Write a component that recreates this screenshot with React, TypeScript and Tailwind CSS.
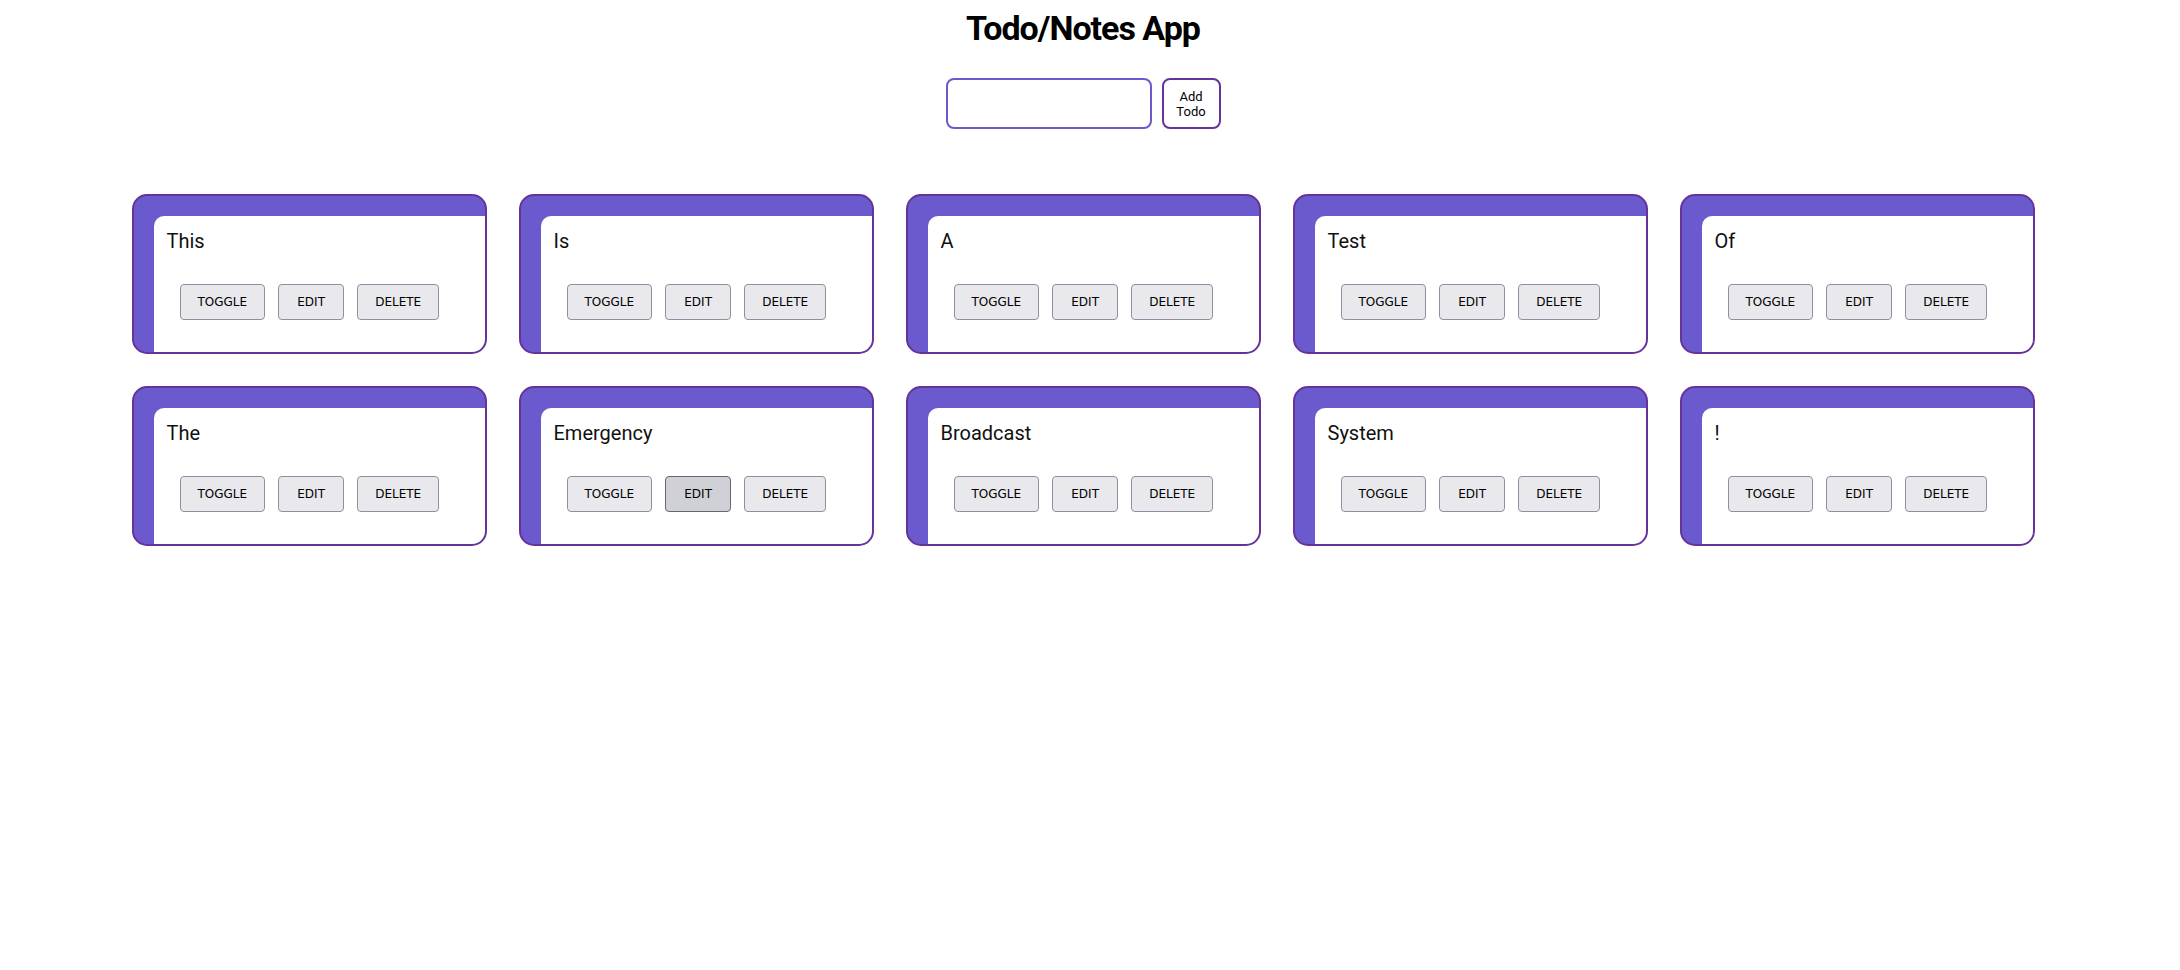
import React from "react";

const items = ["This", "Is", "A", "Test", "Of", "The", "Emergency", "Broadcast", "System", "!"];

function Btn({ label, hover, wide }: { label: string; hover?: boolean; wide?: boolean }) {
  return (
    <button
      className={
        "h-[36px] px-[17px] rounded-[4px] border text-[12px] leading-[14px] text-black " +
        (wide ? "min-w-[66px] " : "") +
        (hover ? "bg-[#d0d0d7] border-[#676774]" : "bg-[#e9e9ed] border-[#8f8f9d]")
      }
      style={{ fontFamily: '"DejaVu Sans", sans-serif' }}
    >
      {label}
    </button>
  );
}

export default function App() {
  return (
    <div
      className="w-[2166px] min-h-[970px] bg-white text-black flex flex-col items-center"
      style={{ fontFamily: 'Roboto, "Noto Sans", sans-serif' }}
    >
      <h1 className="mt-[8px] text-[34px] leading-[40px] font-bold tracking-[-1px]">Todo/Notes App</h1>
      <div className="mt-[30px] flex gap-[10px]">
        <input className="w-[206px] h-[51px] rounded-[8px] border-2 border-[#6a5acd] bg-white outline-none" />
        <button className="w-[59px] h-[51px] rounded-[8px] border-2 border-[#663399] bg-white text-[13px] leading-[15px] text-black">
          Add
          <br />
          Todo
        </button>
      </div>
      <div className="mt-[65px] w-[1903px] grid grid-cols-5 gap-[32px]">
        {items.map((t, i) => (
          <div
            key={i}
            className="h-[160px] rounded-[15px] border-2 border-[#663399] bg-[#6a5acd] overflow-hidden pt-[20px] pl-[20px] flex"
          >
            <div className="flex-1 bg-white rounded-tl-[10px] pt-[11px] pb-[31px]">
              <div className="pl-[13px] text-[20px] leading-[28px] text-[#111]">{t}</div>
              <div className="mt-[29px] pl-[26px] flex gap-[13px]">
                <Btn label="TOGGLE" />
                <Btn label="EDIT" wide hover={i === 6} />
                <Btn label="DELETE" />
              </div>
            </div>
          </div>
        ))}
      </div>
    </div>
  );
}
